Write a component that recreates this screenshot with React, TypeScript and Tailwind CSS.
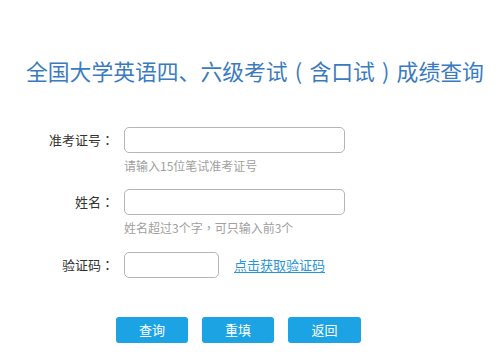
import React from "react";

const font = { fontFamily: '"Noto Sans CJK SC", "Noto Sans", sans-serif' };
const tc = { fontFamily: '"Noto Sans CJK TC", "Noto Sans CJK SC", sans-serif' };

function Colon() {
  return <span style={tc}>：</span>;
}

export default function App() {
  return (
    <div className="w-[499px] h-[352px] bg-white overflow-hidden" style={font}>
      <div className="pt-[56px] h-[86px] pl-[26px] text-[21.8px] leading-[30px] text-[#3a7bbf] whitespace-nowrap">
        全国大学英语四、六级考试<span className="inline-block w-[1em] text-center">(</span>含口试<span className="inline-block w-[1em] text-center">)</span>成绩查询
      </div>
      <div className="flex flex-col mt-[41px]">
        <div className="flex items-center">
          <div className="w-[114px] text-right text-[13px] text-[#333]">
            准考证号<Colon />
          </div>
          <div className="ml-[10px] w-[221px] h-[26px] border border-[#b5b5b5] rounded-[5px] bg-white" />
        </div>
        <div className="ml-[124px] mt-[4px] h-[18px] text-[12px] leading-[18px] text-[#a0a0a0]">
          请输入15位笔试准考证号
        </div>
        <div className="flex items-center mt-[14px]">
          <div className="w-[114px] text-right text-[13px] text-[#333]">
            姓名<Colon />
          </div>
          <div className="ml-[10px] w-[221px] h-[26px] border border-[#b5b5b5] rounded-[5px] bg-white" />
        </div>
        <div className="ml-[124px] mt-[4px] h-[18px] text-[12px] leading-[18px] text-[#a0a0a0]">
          姓名超过3个字<span style={tc}>，</span>可只输入前3个
        </div>
        <div className="flex items-center mt-[15px]">
          <div className="w-[114px] text-right text-[13px] text-[#333]">
            验证码<Colon />
          </div>
          <div className="ml-[10px] w-[95px] h-[26px] border border-[#b5b5b5] rounded-[5px] bg-white" />
          <a className="ml-[15px] text-[13px] text-[#2a94d6] underline underline-offset-2 cursor-pointer">
            点击获取验证码
          </a>
        </div>
        <div className="flex ml-[116px] mt-[39px] gap-[14px]">
          <button className="w-[72px] h-[26px] rounded-[3px] bg-[#1ba3e3] text-white text-[13px]">查询</button>
          <button className="w-[72px] h-[26px] rounded-[3px] bg-[#1ba3e3] text-white text-[13px]">重填</button>
          <button className="w-[73px] h-[26px] rounded-[3px] bg-[#1ba3e3] text-white text-[13px]">返回</button>
        </div>
      </div>
    </div>
  );
}
